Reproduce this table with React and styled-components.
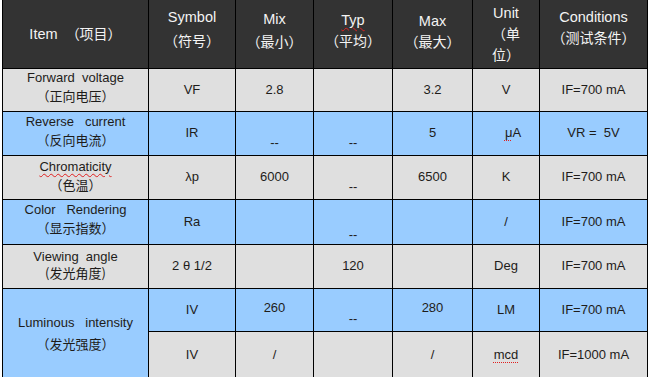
import React from 'react';
import styled, { createGlobalStyle } from 'styled-components';

const GlobalStyle = createGlobalStyle`
  body {
    margin: 0;
    background: #fff;
  }
`;

const Sheet = styled.table`
  margin-left: 2px;
  width: 646px;
  table-layout: fixed;
  border-collapse: collapse;
  font-family: "Liberation Sans", Arial, "Noto Sans CJK SC", sans-serif;
  font-size: 13px;
  color: #1e1c1a;
`;

const HeadRow = styled.tr`
  height: 68px;
`;

const HeadCell = styled.th`
  padding: 0 0 ${p => p.$lift || 0}px;
  background: #333333;
  color: #f4f4f4;
  font-weight: normal;
  font-size: 14.5px;
  line-height: ${p => p.$lh || 22}px;
  border: 1px solid #000;
  border-top: none;
  text-align: center;
  vertical-align: middle;
  white-space: pre;
`;

const Row = styled.tr`
  height: ${p => p.$h}px;
`;

const Cell = styled.td`
  padding: ${p => (p.$top != null ? `${p.$top}px 0 0` : `0 0 ${p.$lift || 0}px`)};
  padding-left: ${p => p.$shift || 0}px;
  background: ${p => (p.$tone === 'blue' ? '#99ccff' : '#dfdfdf')};
  border: 1px solid #000;
  text-align: center;
  vertical-align: ${p => (p.$top != null ? 'top' : 'middle')};
  line-height: ${p => p.$lh || 18}px;
  white-space: pre;
`;

const Cjk = styled.span`
  font-family: "Noto Sans CJK SC", sans-serif;
  font-size: ${p => p.$size || 13}px;
`;

const Flagged = styled.span`
  text-decoration: underline wavy #e02020;
  text-decoration-thickness: 1px;
  text-underline-offset: 2px;
`;

const Dotted = styled.span`
  text-decoration: underline dotted #e02020;
  text-decoration-thickness: 1px;
  text-underline-offset: 3px;
`;

const widths = [146, 87, 78, 79, 80, 67, 108];

const Dash = ({ tone, top }) => (
  <Cell $tone={tone} $top={top}>--</Cell>
);

export default function App() {
  return (
    <>
      <GlobalStyle />
      <Sheet>
        <colgroup>
          {widths.map((w, i) => (
            <col key={i} style={{ width: w }} />
          ))}
        </colgroup>
        <thead>
          <HeadRow>
            <HeadCell>Item  <Cjk $size={14}>（项目）</Cjk></HeadCell>
            <HeadCell $lift={8} $lh={23}>Symbol{'\n'}<Cjk $size={14}>（符号）</Cjk></HeadCell>
            <HeadCell $lift={6}>Mix{'\n'}<Cjk $size={14}>（最小）</Cjk></HeadCell>
            <HeadCell $lift={6} $lh={20}><Flagged>Typ</Flagged>{'\n'}<Cjk $size={14}>（平均）</Cjk></HeadCell>
            <HeadCell $lift={4} $lh={20}>Max{'\n'}<Cjk $size={14}>（最大）</Cjk></HeadCell>
            <HeadCell $lh={20}>Unit{'\n'}<Cjk $size={14}>（单{'\n'}位）</Cjk></HeadCell>
            <HeadCell $lift={12} $lh={20}>Conditions{'\n'}<Cjk $size={14}>（测试条件）</Cjk></HeadCell>
          </HeadRow>
        </thead>
        <tbody>
          <Row $h={43}>
            <Cell $lift={4}>Forward  voltage{'\n'}<Cjk>（正向电压）</Cjk></Cell>
            <Cell>VF</Cell>
            <Cell>2.8</Cell>
            <Cell />
            <Cell>3.2</Cell>
            <Cell>V</Cell>
            <Cell>IF=700 mA</Cell>
          </Row>
          <Row $h={44}>
            <Cell $tone="blue" $lift={4}>Reverse   current{'\n'}<Cjk>（反向电流）</Cjk></Cell>
            <Cell $tone="blue">IR</Cell>
            <Dash tone="blue" top={22} />
            <Dash tone="blue" top={22} />
            <Cell $tone="blue">5</Cell>
            <Cell $tone="blue" $shift={14}><Dotted>μ</Dotted>A</Cell>
            <Cell $tone="blue">VR =  5V</Cell>
          </Row>
          <Row $h={44}>
            <Cell $lift={2}><Flagged>Chromaticity</Flagged>{'\n'}<Cjk>（色温）</Cjk></Cell>
            <Cell>λp</Cell>
            <Cell>6000</Cell>
            <Dash top={22} />
            <Cell>6500</Cell>
            <Cell>K</Cell>
            <Cell>IF=700 mA</Cell>
          </Row>
          <Row $h={43}>
            <Cell $tone="blue" $lift={4}>Color   Rendering{'\n'}<Cjk>（显示指数）</Cjk></Cell>
            <Cell $tone="blue">Ra</Cell>
            <Cell $tone="blue" />
            <Dash tone="blue" top={26} />
            <Cell $tone="blue" />
            <Cell $tone="blue">/</Cell>
            <Cell $tone="blue">IF=700 mA</Cell>
          </Row>
          <Row $h={44}>
            <Cell $lh={16} $lift={1}>Viewing  angle{'\n'}<Cjk>(发光角度)</Cjk></Cell>
            <Cell>2 θ 1/2</Cell>
            <Cell />
            <Cell>120</Cell>
            <Cell />
            <Cell>Deg</Cell>
            <Cell>IF=700 mA</Cell>
          </Row>
          <Row $h={43}>
            <Cell $tone="blue" rowSpan={2} $lh={21}>Luminous   intensity{'\n'}<Cjk>（发光强度）</Cjk></Cell>
            <Cell $tone="blue">IV</Cell>
            <Cell $tone="blue" $lift={4}>260</Cell>
            <Dash tone="blue" top={21} />
            <Cell $tone="blue" $lift={4}>280</Cell>
            <Cell $tone="blue">LM</Cell>
            <Cell $tone="blue">IF=700 mA</Cell>
          </Row>
          <Row $h={48}>
            <Cell>IV</Cell>
            <Cell>/</Cell>
            <Cell />
            <Cell>/</Cell>
            <Cell><Dotted>mcd</Dotted></Cell>
            <Cell>IF=1000 mA</Cell>
          </Row>
        </tbody>
      </Sheet>
    </>
  );
}
